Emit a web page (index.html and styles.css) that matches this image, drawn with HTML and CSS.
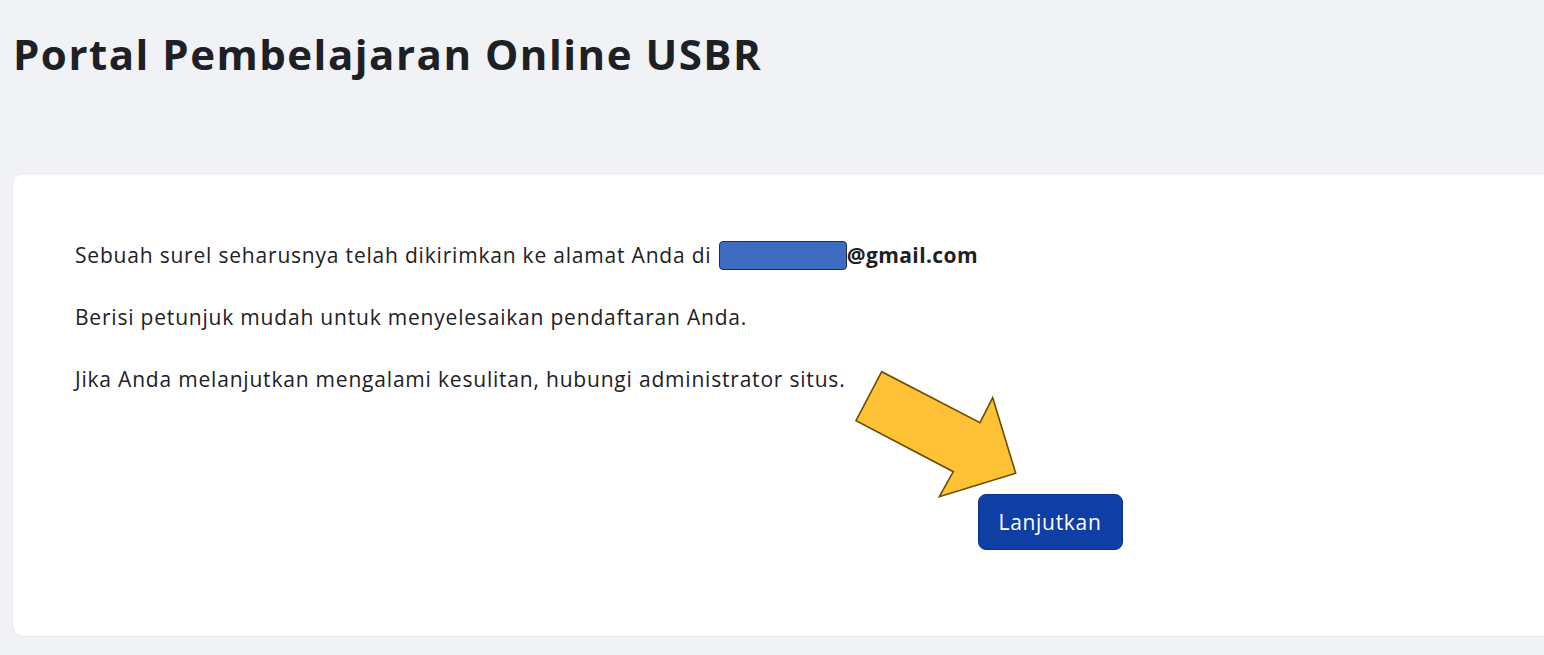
FILE: index.html
```html
<!DOCTYPE html>
<html lang="id">
<head>
  <meta charset="UTF-8" />
  <title>Portal Pembelajaran Online USBR</title>
  <link rel="stylesheet" href="styles.css">
</head>
<body>

<header class="page-header">
  <h1>Portal Pembelajaran Online USBR</h1>
</header>

<main class="card">
  <div class="card-body">
    <p>Sebuah surel seharusnya telah dikirimkan ke alamat Anda di <span class="redacted"></span><strong>@gmail.com</strong></p>
    <p>Berisi petunjuk mudah untuk menyelesaikan pendaftaran Anda.</p>
    <p>Jika Anda melanjutkan mengalami kesulitan, hubungi administrator situs.</p>

    <div class="continue">
      <button type="button" class="btn-primary">Lanjutkan</button>
    </div>
  </div>
</main>

<!-- annotation arrow pointing at the button -->
<svg class="pointer" width="175" height="140" viewBox="0 0 175 140">
  <polygon points="31.7,6.7 6,55.7 103.3,106.7 89.3,131.7 165.7,108.3 142.7,32.7 130,57.7"
           fill="#ffc135" stroke="#6a4e00" stroke-width="1.6" stroke-linejoin="miter" />
</svg>

</body>
</html>
```

FILE: styles.css
```css
html {
  overflow: hidden;
}
body {
  background-color: #f1f2f6;
  color: #1d2125;
  font-family: 'Open Sans', 'Noto Sans', sans-serif;
  margin: 0;
  height: 100vh;
}
.page-header {
  padding: 27px 0 0 13px;
  height: 173px;
  box-sizing: border-box;
}
.page-header h1 {
  margin: 0;
  font-size: 42px;
  font-weight: 700;
  line-height: 1.3;
  letter-spacing: 1.5px;
}
.card {
  display: block;
  margin-left: 12px;
  width: 2076px;
  background-color: #fff;
  border: 1px solid #e8e9ee;
  border-radius: 12px;
  box-sizing: border-box;
}
.card-body {
  padding: 66px 62px 86px;
  font-size: 21px;
  line-height: 30px;
  letter-spacing: 0.8px;
}
.card-body p {
  margin: 0 0 32px;
}
.redacted {
  display: inline-block;
  width: 126px;
  height: 27px;
  vertical-align: -7px;
  background-color: #3d6cc0;
  border: 1.5px solid #1f2d4d;
  border-radius: 4px;
  margin-left: 1px;
}
.card-body strong {
  font-weight: 700;
  letter-spacing: 0.4px;
}
.continue {
  display: flex;
  justify-content: center;
  margin-top: 100px;
}
.btn-primary {
  width: 145px;
  height: 56px;
  background-color: #0f3ea5;
  color: #fff;
  border: 1px solid #0b348e;
  border-radius: 8px;
  font-family: inherit;
  font-size: 21px;
  letter-spacing: 0.7px;
}
.pointer {
  position: absolute;
  left: 850px;
  top: 365px;
}
```
